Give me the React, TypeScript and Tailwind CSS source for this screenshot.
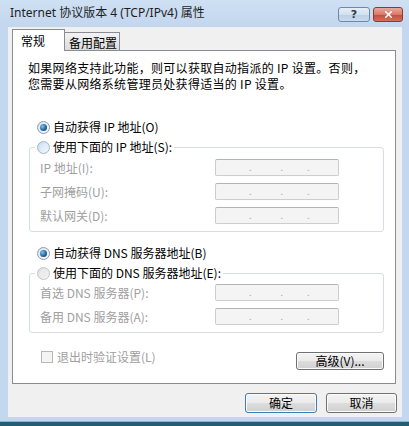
import { X } from "lucide-react";

type RadioState = "on" | "off" | "disabled";

function Radio({ state }: { state: RadioState }) {
  if (state === "on") {
    return (
      <span className="flex h-[13px] w-[13px] shrink-0 items-center justify-center rounded-full border border-[#8d9cac] bg-[linear-gradient(135deg,#d9e3ee,#f8fafc)]">
        <span className="h-[7px] w-[7px] rounded-full bg-[radial-gradient(circle_at_35%_35%,#7fc3ee,#1d5f98_60%,#123f6a)]" />
      </span>
    );
  }
  if (state === "off") {
    return (
      <span className="flex h-[13px] w-[13px] shrink-0 items-center justify-center rounded-full border border-[#9fb6cc] bg-[linear-gradient(135deg,#c6dcef,#f3f8fc)]">
        <span className="h-[7px] w-[7px] rounded-full bg-[linear-gradient(135deg,#d4e6f5,#eef5fb)]" />
      </span>
    );
  }
  return (
    <span className="flex h-[13px] w-[13px] shrink-0 items-center justify-center rounded-full border border-[#c4c4c4] bg-[linear-gradient(135deg,#dedede,#f6f6f6)]">
      <span className="h-[7px] w-[7px] rounded-full bg-[#ececec]" />
    </span>
  );
}

function IpBox() {
  return (
    <div className="flex h-[17px] w-[124px] items-end rounded-[2px] border border-[#cdcdcd] border-t-[#b4b4b4] bg-[#f4f4f4] pb-[3px] text-[9px] leading-none text-[#a9a9a9]">
      <span className="ml-[33px]">.</span>
      <span className="ml-[29px]">.</span>
      <span className="ml-[24px]">.</span>
    </div>
  );
}

function Row({ label }: { label: string }) {
  return (
    <div className="flex h-[17px] items-center">
      <span className="w-[175px] text-[#a0a0a0]">{label}</span>
      <IpBox />
    </div>
  );
}

const btn =
  "rounded-[3px] border text-[12px] leading-none text-black shadow-[inset_0_0_0_1px_#fbfbfb] bg-[linear-gradient(#f3f3f3_0%,#ebebeb_50%,#dddddd_51%,#d0d0d0_100%)]";

export default function App() {
  return (
    <div className="flex h-[426px] w-[409px] flex-col bg-[#c3d7ee] [font-family:'Noto_Sans_CJK_SC',sans-serif] text-[12px] text-black">
      {/* title bar */}
      <div className="flex h-[27px] shrink-0 items-start bg-linear-to-b from-[#cfe0f3] to-[#c2d6ee]">
        <span className="ml-[10px] mt-[5px] [font-family:'Noto_Sans','Noto_Sans_CJK_SC',sans-serif] text-[12px] leading-[16px] text-[#1e1e1e]">
          Internet 协议版本 4 (TCP/IPv4) 属性
        </span>
        <div className="ml-auto mr-[6px] mt-[7px] flex gap-[3px]">
          <div className="flex h-[15px] w-[32px] items-center justify-center rounded-[3px] border border-[#7088a6] bg-[linear-gradient(#e6eef7_0%,#d3e0ee_50%,#bccfe4_51%,#c9daec_100%)] [font-family:'DejaVu_Sans',sans-serif] text-[11px] font-bold leading-none text-[#2d3b4c]">
            ?
          </div>
          <div className="flex h-[15px] w-[30px] items-center justify-center rounded-[3px] border border-[#8b3a32] bg-[linear-gradient(#e9a99b_0%,#d97a6a_50%,#c44a3b_51%,#d2705f_100%)]">
            <X size={11} strokeWidth={3.5} className="text-white" />
          </div>
        </div>
      </div>

      {/* client area */}
      <div className="ml-[8px] flex h-[390px] w-[394px] shrink-0 flex-col bg-[#f0f0f0] pl-[4px] pt-[2px]">
        {/* tabs */}
        <div className="flex h-[21px] items-end">
          <div className="relative z-10 -mb-px flex h-[22px] w-[53px] items-center border border-b-0 border-[#898c95] bg-white pl-[8px]">
            常规
          </div>
          <div className="flex h-[18px] w-[55px] items-center border border-b-0 border-l-0 border-[#898c95] bg-linear-to-b from-[#f3f3f3] to-[#dcdcdc] pl-[4px] pt-[2px]">
            备用配置
          </div>
        </div>

        {/* tab panel */}
        <div className="flex h-[334px] w-[384px] flex-col border border-[#898c95] bg-white pl-[15px] pt-[9px]">
          <p className="leading-[16px] tracking-[0.3px]">
            如果网络支持此功能，则可以获取自动指派的 IP 设置。否则，
            <br />
            您需要从网络系统管理员处获得适当的 IP 设置。
          </p>

          <div className="ml-[9px] mt-[25px] flex h-[20px] items-center gap-[3px]">
            <Radio state="on" />
            <span>自动获得 IP 地址(O)</span>
          </div>

          <fieldset className="ml-[1px] w-[355px] rounded-[3px] border border-[#d5dfe5] pb-[7px]">
            <legend className="ml-[5px] bg-white px-[2px]">
              <span className="flex h-[20px] items-center gap-[3px]">
                <Radio state="off" />
                <span>使用下面的 IP 地址(S):</span>
              </span>
            </legend>
            <div className="mt-[2px] flex flex-col gap-[7px] pl-[10px]">
              <Row label="IP 地址(I):" />
              <Row label="子网掩码(U):" />
              <Row label="默认网关(D):" />
            </div>
          </fieldset>

          <div className="ml-[9px] mt-[11px] flex h-[20px] items-center gap-[3px]">
            <Radio state="on" />
            <span>自动获得 DNS 服务器地址(B)</span>
          </div>

          <fieldset className="ml-[1px] w-[355px] rounded-[3px] border border-[#d5dfe5] pb-[7px]">
            <legend className="ml-[5px] bg-white px-[2px]">
              <span className="flex h-[20px] items-center gap-[3px]">
                <Radio state="disabled" />
                <span>使用下面的 DNS 服务器地址(E):</span>
              </span>
            </legend>
            <div className="mt-[1px] flex flex-col gap-[7px] pl-[10px]">
              <Row label="首选 DNS 服务器(P):" />
              <Row label="备用 DNS 服务器(A):" />
            </div>
          </fieldset>

          <div className="mt-[17px] flex w-[356px] items-start">
            <div className="ml-[13px] flex h-[14px] items-center gap-[4px] text-[#a0a0a0]">
              <span className="h-[12px] w-[12px] border border-[#b8b8b8] bg-[#f4f4f4]" />
              <span>退出时验证设置(L)</span>
            </div>
            <button className={`ml-auto mt-[2px] h-[18px] w-[88px] border-[#707070] ${btn}`}>
              高级(V)...
            </button>
          </div>
        </div>

        {/* dialog buttons */}
        <div className="mt-[9px] flex justify-end gap-[9px] pr-[5px]">
          <button className={`h-[20px] w-[72px] border-[#3c7fb1] ${btn}`}>确定</button>
          <button className={`h-[20px] w-[71px] border-[#707070] ${btn}`}>取消</button>
        </div>
      </div>

      {/* bottom frame */}
      <div className="h-[4px] shrink-0" />
      <div className="h-px shrink-0 bg-[#7fb8d6]" />
      <div className="flex-1 bg-[#235d70]" />
    </div>
  );
}
